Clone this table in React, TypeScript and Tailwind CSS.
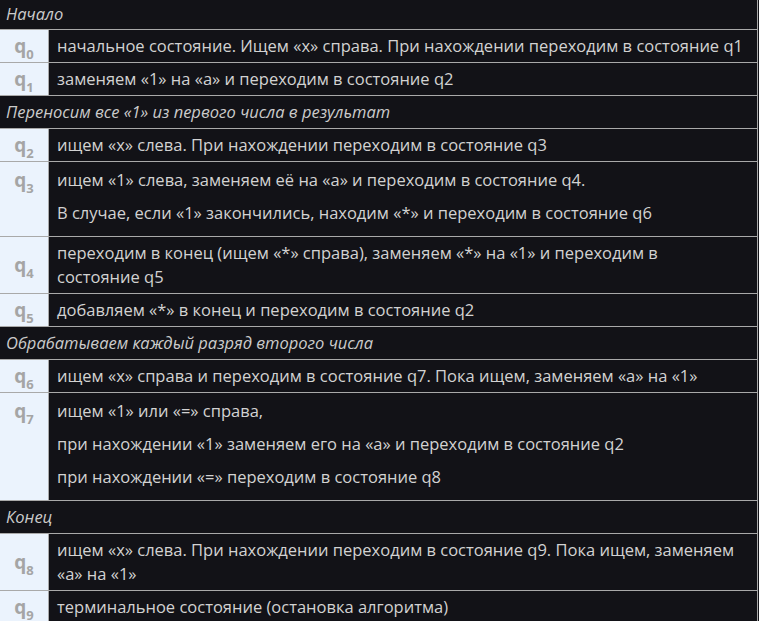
const font = { fontFamily: '"Open Sans", "Noto Sans", sans-serif' };

type Row =
  | { kind: "head"; text: string }
  | { kind: "state"; n: number; lines: string[]; paras?: boolean };

const rows: Row[] = [
  { kind: "head", text: "Начало" },
  { kind: "state", n: 0, lines: ["начальное состояние. Ищем «x» справа. При нахождении переходим в состояние q1"] },
  { kind: "state", n: 1, lines: ["заменяем «1» на «a» и переходим в состояние q2"] },
  { kind: "head", text: "Переносим все «1» из первого числа в результат" },
  { kind: "state", n: 2, lines: ["ищем «x» слева. При нахождении переходим в состояние q3"] },
  {
    kind: "state",
    n: 3,
    paras: true,
    lines: [
      "ищем «1» слева, заменяем её на «a» и переходим в состояние q4.",
      "В случае, если «1» закончились, находим «*» и переходим в состояние q6",
    ],
  },
  {
    kind: "state",
    n: 4,
    lines: ["переходим в конец (ищем «*» справа), заменяем «*» на «1» и переходим в состояние q5"],
  },
  { kind: "state", n: 5, lines: ["добавляем «*» в конец и переходим в состояние q2"] },
  { kind: "head", text: "Обрабатываем каждый разряд второго числа" },
  { kind: "state", n: 6, lines: ["ищем «x» справа и переходим в состояние q7. Пока ищем, заменяем «a» на «1»"] },
  {
    kind: "state",
    n: 7,
    paras: true,
    lines: [
      "ищем «1» или «=» справа,",
      "при нахождении «1» заменяем его на «a» и переходим в состояние q2",
      "при нахождении «=» переходим в состояние q8",
    ],
  },
  { kind: "head", text: "Конец" },
  {
    kind: "state",
    n: 8,
    lines: ["ищем «x» слева. При нахождении переходим в состояние q9. Пока ищем, заменяем «a» на «1»"],
  },
  { kind: "state", n: 9, lines: ["терминальное состояние (остановка алгоритма)"] },
];

function Label({ n }: { n: number }) {
  return (
    <span className="font-bold text-[#a5a5a5] text-[19px] leading-6">
      q<sub className="text-[13px] align-[-3px]">{n}</sub>
    </span>
  );
}

export default function App() {
  return (
    <div className="bg-[#121217] w-[759px] h-[621px] overflow-hidden" style={font}>
      <div className="w-[758px] border-r border-[#a9a9a9] text-[#d2d2d2] text-[16.5px] leading-6">
        {rows.map((r, i) =>
          r.kind === "head" ? (
            <div
              key={i}
              className={`border-b border-[#a9a9a9] px-[6px] italic text-[#cbcbcb] ${
                i === 0 ? "h-[30px] pt-[2px]" : "h-[33px] pt-[4px]"
              }`}
            >
              {r.text}
            </div>
          ) : (
            <div key={i} className="flex border-b border-[#a9a9a9]">
              <div
                className={`w-[49px] shrink-0 bg-[#ebf3fd] border-r border-[#a9a9a9] flex justify-center ${
                  r.paras ? "items-start pt-[6px]" : "items-center"
                }`}
              >
                <Label n={r.n} />
              </div>
              {r.paras ? (
                <div className="flex-1 pl-[8px] pr-[14px] pt-[6px] pb-[11px] flex flex-col gap-[9px]">
                  {r.lines.map((l, j) => (
                    <p key={j}>{l}</p>
                  ))}
                </div>
              ) : (
                <div className="flex-1 pl-[8px] pr-[14px] pt-[4px] pb-[4px]">{r.lines[0]}</div>
              )}
            </div>
          )
        )}
      </div>
    </div>
  );
}
